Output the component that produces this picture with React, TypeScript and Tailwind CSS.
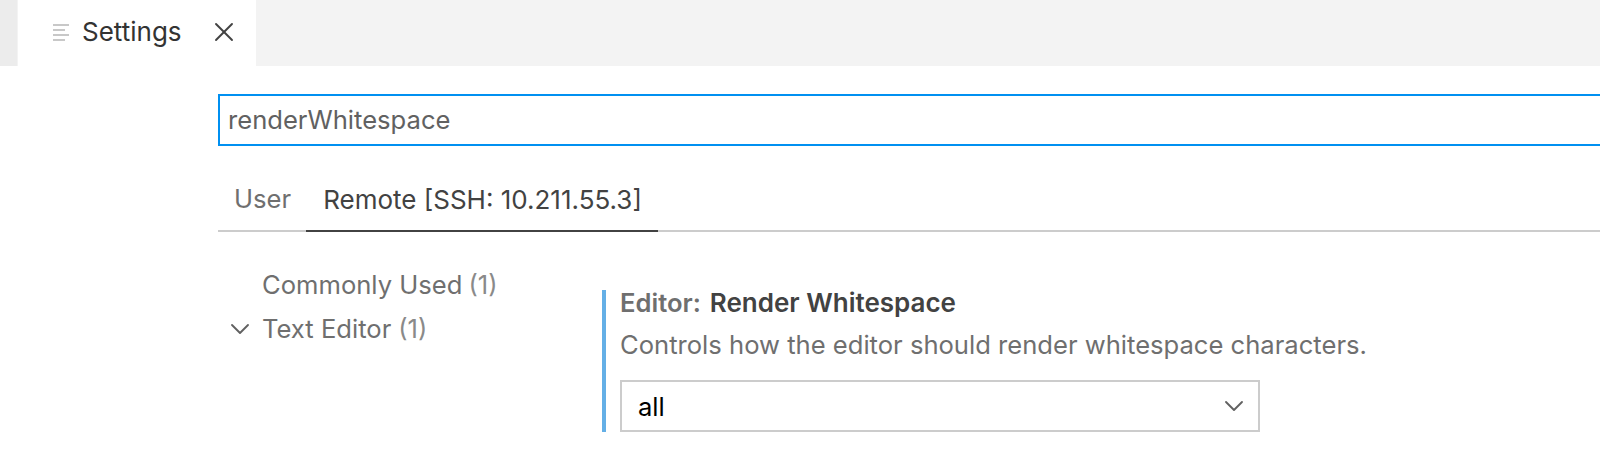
import { ChevronDown, X } from 'lucide-react';

function TabIcon() {
  return (
    <svg width="18" height="18" viewBox="0 0 18 18" className="shrink-0">
      <rect x="0" y="1" width="16" height="2" fill="#c8c8c8" />
      <rect x="0" y="6" width="12" height="2" fill="#c8c8c8" />
      <rect x="0" y="11" width="16" height="2" fill="#c8c8c8" />
      <rect x="0" y="16" width="12" height="2" fill="#c8c8c8" />
    </svg>
  );
}

export default function App() {
  return (
    <div className="h-[456px] w-[1600px] overflow-hidden bg-white font-['Inter',sans-serif] text-[25.6px]">
      <div className="flex h-[66px] bg-[#f3f3f3]">
        <div className="w-[17px] bg-[#ececec]" />
        <div className="ml-px flex w-[238px] items-center bg-white pb-[3px] pl-[35px]">
          <TabIcon />
          <span className="ml-[11px] text-[26px] text-[#333333]">Settings</span>
          <X className="ml-[26px] h-[32px] w-[32px] text-[#424242]" strokeWidth={1.4} />
        </div>
      </div>

      <div className="pl-[218px] pt-[28px]">
        <div className="flex h-[52px] items-center border-2 border-r-0 border-[#0090f1] pl-[8px] text-[#616161]">
          renderWhitespace
        </div>

        <div className="mt-[20px] flex h-[66px] border-b-2 border-[#cccccc]">
          <div className="flex items-center pl-[16px] pr-[15px] pt-[2px] text-[#6f6f6f]">User</div>
          <div className="-mb-[2px] flex items-center border-b-2 border-[#424242] pl-[17px] pr-[16px] pt-[2px] text-[26px] text-[#424242]">
            Remote [SSH: 10.211.55.3]
          </div>
        </div>

        <div className="flex pt-[31px]">
          <div className="w-[384px] text-[#6f6f6f]">
            <div className="flex h-[44px] items-center pl-[44px]">
              Commonly Used<span className="ml-[6px] text-[#8a8a8a]">(1)</span>
            </div>
            <div className="flex h-[44px] items-center pl-[6px]">
              <ChevronDown className="mr-[6px] h-[32px] w-[32px] text-[#616161]" strokeWidth={1.4} />
              Text Editor<span className="ml-[7px] text-[#8a8a8a]">(1)</span>
            </div>
          </div>

          <div className="mt-[27px] h-[142px] w-[800px] border-l-4 border-[#64afe6] pl-[14px]">
            <div className="leading-[26px] font-semibold text-[#6f6f6f]">
              Editor:<span className="ml-[9px] text-[26px] text-[#424242]">Render Whitespace</span>
            </div>
            <div className="mt-[14px] whitespace-nowrap leading-[30px] text-[#6f6f6f]">
              Controls how the editor should render whitespace characters.
            </div>
            <div className="mt-[20px] flex h-[52px] w-[640px] items-center justify-between border-2 border-[#cccccc] pl-[16px] pr-[8px] text-black">
              <span className="pt-[2px]">all</span>
              <ChevronDown className="h-[32px] w-[32px] text-[#616161]" strokeWidth={1.4} />
            </div>
          </div>
        </div>
      </div>
    </div>
  );
}
